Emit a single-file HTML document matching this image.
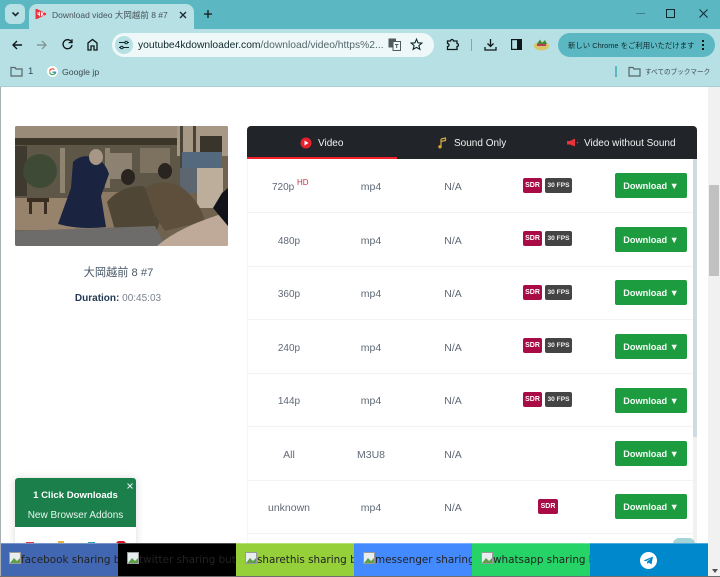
<!DOCTYPE html>
<html><head><meta charset="utf-8"><style>
*{box-sizing:border-box}
html,body{margin:0;padding:0;width:720px;height:577px;overflow:hidden;background:#fff;font-family:"Liberation Sans","Noto Sans CJK JP",sans-serif}
.a{position:absolute;white-space:nowrap}
.c{position:absolute;white-space:nowrap;text-align:center;color:#5f6976;font-size:10.5px;line-height:14px}
.r{margin-top:1px}
.p{font-size:10px;margin-top:2px}
.dl{position:absolute;left:615px;width:72px;height:25px;background:#1c9b3f;border-radius:2px;color:#f4fbf6;font-size:9.2px;font-weight:bold;line-height:26px;text-align:center}
.sdr{position:absolute;left:523px;width:19px;height:15px;background:#a80b45;border-radius:2px;color:#fff;font-size:7px;font-weight:bold;line-height:15px;text-align:center}
.fps{position:absolute;left:545px;width:27px;height:15px;background:#444;border-radius:2px;color:#f0f0f0;font-size:6.6px;font-weight:bold;line-height:15px;text-align:center}
.sep{position:absolute;left:247px;width:446px;height:1px;background:#f3f3f3}
.sh{position:absolute;top:543px;height:33px;width:118px;overflow:hidden;font-family:"DejaVu Sans",sans-serif;font-size:10.4px;line-height:35px;color:#222;white-space:nowrap}
.sh svg{position:absolute;left:9px;top:9px}
.sh span{position:absolute;left:21px;top:0}
</style></head><body>

<!-- tab strip -->
<div class="a" style="left:0;top:0;width:720px;height:29px;background:#5bb8c2"></div>
<div class="a" style="left:5px;top:4px;width:20px;height:20px;background:#b7e0e4;border-radius:6px"></div>
<svg class="a" style="left:11px;top:11px" width="9" height="7" viewBox="0 0 9 7"><path d="M1.5 1.5L4.5 4.5L7.5 1.5" fill="none" stroke="#1b2a2e" stroke-width="1.6"/></svg>
<div class="a" style="left:29px;top:4px;width:165px;height:25px;background:#b7e0e4;border-radius:8px 8px 0 0"></div>
<svg class="a" style="left:34px;top:8px" width="13" height="12" viewBox="0 0 13 12"><path d="M1.5 1.5Q1.5 .5 3 1L11.5 5Q13 6 11.5 7L3 11Q1.5 11.5 1.5 10.5Z" fill="#e8323c"/><path d="M4 4v2.5H6M5.6 3.8V8.2M7.5 3.8V8.2M9.5 4L8 6L9.5 8" fill="none" stroke="#fff" stroke-width=".9"/></svg>
<div class="a" style="left:52px;top:8px;font-size:8.5px;line-height:14px;color:#46545a">Download video 大岡越前 8 #7</div>
<svg class="a" style="left:179px;top:11px" width="8" height="8" viewBox="0 0 8 8"><path d="M1 1L7 7M7 1L1 7" stroke="#1b2a2e" stroke-width="1.3"/></svg>
<svg class="a" style="left:203px;top:9px" width="10" height="10" viewBox="0 0 10 10"><path d="M5 1V9M1 5H9" stroke="#10181a" stroke-width="1.3"/></svg>
<!-- window controls -->
<div class="a" style="left:636px;top:13px;width:9px;height:1px;background:#3f8089"></div>
<div class="a" style="left:666px;top:9px;width:9px;height:9px;border:1.3px solid #10282c"></div>
<svg class="a" style="left:699px;top:9px" width="9" height="9" viewBox="0 0 9 9"><path d="M.5 .5L8.5 8.5M8.5 .5L.5 8.5" stroke="#10282c" stroke-width="1"/></svg>

<!-- toolbar -->
<div class="a" style="left:0;top:29px;width:720px;height:57px;background:#b7e0e4"></div>
<div class="a" style="left:0;top:86px;width:720px;height:1px;background:#a9cfd4"></div>
<svg class="a" style="left:10px;top:38px" width="14" height="14" viewBox="0 0 14 14"><path d="M12 7H3M7 3L3 7L7 11" fill="none" stroke="#10181a" stroke-width="1.4"/></svg>
<svg class="a" style="left:35px;top:38px" width="14" height="14" viewBox="0 0 14 14"><path d="M2 7H11M7 3L11 7L7 11" fill="none" stroke="#84989c" stroke-width="1.4"/></svg>
<svg class="a" style="left:61px;top:38px" width="13" height="13" viewBox="0 0 13 13"><path d="M10.5 4A4.5 4.5 0 1 0 11 7" fill="none" stroke="#10181a" stroke-width="1.4"/><path d="M11 1.2V4.6H7.6" fill="none" stroke="#10181a" stroke-width="1.3"/></svg>
<svg class="a" style="left:86px;top:38px" width="13" height="13" viewBox="0 0 13 13"><path d="M2 12V5L6.5 1.5L11 5V12H8V8H5V12Z" fill="none" stroke="#10181a" stroke-width="1.3"/></svg>
<div class="a" style="left:112px;top:33px;width:322px;height:24px;background:#eef8f8;border-radius:12px"></div>
<div class="a" style="left:115px;top:36px;width:18px;height:18px;background:#b7e0e4;border-radius:9px"></div>
<svg class="a" style="left:119px;top:40px" width="10" height="10" viewBox="0 0 10 10"><path d="M0 2.5H6M8.5 2.5H10M0 7.5H1.5M4 7.5H10" stroke="#10282c" stroke-width="1.1"/><circle cx="7.2" cy="2.5" r="1.3" fill="none" stroke="#10282c"/><circle cx="2.8" cy="7.5" r="1.3" fill="none" stroke="#10282c"/></svg>
<div class="a" style="left:138px;top:39px;font-size:10.3px;line-height:14px;color:#10282c">youtube4kdownloader.com<span style="color:#52666a">/download/video/https%2...</span></div>
<svg class="a" style="left:388px;top:38px" width="13" height="13" viewBox="0 0 13 13"><rect x="0.5" y="0.5" width="7.5" height="9" fill="#4d5a5e"/><rect x="5" y="3.5" width="7.5" height="9" fill="#eef8f8" stroke="#4d5a5e"/><path d="M7 6.5H10.5M8.7 6V10" stroke="#4d5a5e"/></svg>
<svg class="a" style="left:410px;top:38px" width="13" height="13" viewBox="0 0 13 13"><path d="M6.5 1.2L8 4.8L11.9 5.1L8.9 7.6L9.9 11.4L6.5 9.4L3.1 11.4L4.1 7.6L1.1 5.1L5 4.8Z" fill="none" stroke="#10282c" stroke-width="1.1"/></svg>
<svg class="a" style="left:446px;top:38px" width="13" height="13" viewBox="0 0 13 13"><path d="M1.5 3H4.5A1.5 1.5 0 0 1 7.5 3H11V5.5A1.5 1.5 0 0 1 11 8.5V11.5H1.5V8.5A1.5 1.5 0 0 0 1.5 5.5Z" fill="none" stroke="#10181a" stroke-width="1.3"/></svg>
<div class="a" style="left:471px;top:39px;width:1px;height:12px;background:#5bb8c2"></div>
<svg class="a" style="left:484px;top:38px" width="13" height="13" viewBox="0 0 13 13"><path d="M6.5 1V8M3.5 5.5L6.5 8.5L9.5 5.5M1 9V12H12V9" fill="none" stroke="#10181a" stroke-width="1.3"/></svg>
<svg class="a" style="left:511px;top:39px" width="11" height="11" viewBox="0 0 11 11"><rect x="0.6" y="0.6" width="9.8" height="9.8" fill="none" stroke="#10181a" stroke-width="1.2"/><rect x="6" y="1" width="4" height="9" fill="#10181a"/></svg>
<svg class="a" style="left:534px;top:38px" width="15" height="13" viewBox="0 0 15 13"><ellipse cx="7.5" cy="8" rx="7.5" ry="4.5" fill="#d6c66a"/><path d="M3 6L6 1.5L8 5L11 2L13 6Z" fill="#3d8a3f"/><rect x="3" y="6" width="9" height="2" fill="#c23a5a"/></svg>
<div class="a" style="left:558px;top:33px;width:157px;height:24px;background:#5bb8c2;border-radius:12px"></div>
<div class="a" style="left:568px;top:40px;font-size:7.4px;line-height:12px;color:#10282c">新しい Chrome をご利用いただけます</div>
<div class="a" style="left:702px;top:40px;width:2px;height:2px;background:#10181a;box-shadow:0 4px #10181a,0 8px #10181a"></div>

<!-- bookmarks -->
<svg class="a" style="left:10px;top:66px" width="13" height="11" viewBox="0 0 13 11"><path d="M1 1.5H5L6 3H12V10H1Z" fill="none" stroke="#56666a" stroke-width="1.2"/></svg>
<div class="a" style="left:28px;top:66px;font-size:9.5px;line-height:12px;color:#2c4a60">1</div>
<svg class="a" style="left:47px;top:66px" width="11" height="11" viewBox="0 0 24 24"><circle cx="12" cy="12" r="12" fill="#fff"/><path d="M19 12.5H12V15H16.3A4.8 4.8 0 0 1 7.3 13L4.7 15A8 8 0 0 0 20 12.5Z" fill="#34a853"/><path d="M7.3 11A4.8 4.8 0 0 1 15.2 8.8L17 7A8 8 0 0 0 4.7 9Z" fill="#ea4335"/><path d="M4.7 9A8 8 0 0 0 4.7 15L7.3 13A5 5 0 0 1 7.3 11Z" fill="#fbbc05"/><path d="M20 12H12V14.5H16.5L19 17Q20.5 15 20 12Z" fill="#4285f4"/></svg>
<div class="a" style="left:62px;top:66px;font-size:8.7px;line-height:12px;color:#3d4a4e">Google jp</div>
<div class="a" style="left:615px;top:66px;width:2px;height:11px;background:#5bb8c2"></div>
<svg class="a" style="left:628px;top:66px" width="13" height="11" viewBox="0 0 13 11"><path d="M1 1.5H5L6 3H12V10H1Z" fill="none" stroke="#56666a" stroke-width="1.2"/></svg>
<div class="a" style="left:645px;top:67px;font-size:6.6px;line-height:12px;color:#3d4a4e">すべてのブックマーク</div>

<!-- page edges -->
<div class="a" style="left:0;top:87px;width:1px;height:490px;background:#a8b0b4"></div>
<div class="a" style="left:708px;top:87px;width:12px;height:490px;background:#f1f1f1"></div>
<div class="a" style="left:709px;top:185px;width:10px;height:91px;background:#c1c1c1"></div>
<div class="a" style="left:712px;top:569px;border:3px solid transparent;border-top:4px solid #505050"></div>

<!-- thumbnail -->
<svg class="a" style="left:15px;top:126px" width="213" height="120" viewBox="0 0 213 120">
<defs><clipPath id="r"><rect width="213" height="120" rx="2"/></clipPath></defs>
<g clip-path="url(#r)">
<rect width="213" height="120" fill="#6f6350"/>
<rect x="0" y="0" width="162" height="12" fill="#9a8b78"/>
<rect x="0" y="12" width="165" height="7" fill="#3c3629"/>
<rect x="0" y="19" width="170" height="55" fill="#5e5646"/>
<rect x="0" y="20" width="12" height="50" fill="#3f3a30"/>
<circle cx="25" cy="45" r="17" fill="#3f4a36"/>
<rect x="45" y="22" width="5" height="45" fill="#8f8470"/>
<rect x="90" y="22" width="5" height="40" fill="#8f8470"/>
<rect x="95" y="27" width="22" height="26" fill="#8d8272"/>
<rect x="125" y="22" width="30" height="25" fill="#7c725f"/>
<rect x="162" y="0" width="51" height="30" fill="#a69884"/>
<rect x="165" y="0" width="3" height="50" fill="#4a4438"/>
<rect x="178" y="0" width="3" height="30" fill="#4a4438"/>
<rect x="185" y="10" width="22" height="18" fill="#3a352c"/>
<rect x="167" y="26" width="40" height="16" fill="#54697e"/>
<rect x="182" y="42" width="26" height="40" fill="#bcae9a"/>
<rect x="165" y="42" width="17" height="25" fill="#5d6670"/>
<path d="M0 72H60V104H0Z" fill="#97836c"/>
<path d="M60 66H105V104H60Z" fill="#8c7a64"/>
<rect x="12" y="72" width="22" height="4" fill="#3a2e22"/>
<rect x="14" y="76" width="3" height="12" fill="#3a2e22"/><rect x="29" y="76" width="3" height="12" fill="#3a2e22"/>
<path d="M43 98L56 62L58 36Q66 28 78 31Q90 35 94 48L86 70L91 101Q65 104 43 98Z" fill="#1a2340"/>
<ellipse cx="81" cy="31" rx="7" ry="8" fill="#a89784"/>
<path d="M92 76Q105 60 128 60Q142 72 145 95L142 104H100Z" fill="#4f4636"/>
<ellipse cx="113" cy="51" rx="7" ry="8" fill="#2a2420"/>
<path d="M130 62Q145 52 165 60Q185 75 190 95L150 105L140 90Z" fill="#5d4f3c"/>
<ellipse cx="150" cy="45" rx="7" ry="8" fill="#2a2420"/>
<path d="M0 105L140 100L150 120H0Z" fill="#6d6c6a"/>
<path d="M142 120Q165 100 213 86V120Z" fill="#bfa998"/>
<path d="M198 82L207 67L213 62V100Z" fill="#12121a"/>
</g></svg>
<div class="c" style="left:12px;width:213px;top:266px;font-size:11.2px;color:#4a5868">大岡越前 8 #7</div>
<div class="c" style="left:15px;width:206px;top:292px;font-size:10px;color:#7a838e"><b style="color:#253a55">Duration:</b> 00:45:03</div>

<!-- tabs header -->
<div class="a" style="left:247px;top:126px;width:450px;height:33px;background:#212529;border-radius:4px 4px 0 0"></div>
<div class="a" style="left:247px;top:157px;width:150px;height:2px;background:#f5222d"></div>
<svg class="a" style="left:300px;top:137px" width="12" height="12" viewBox="0 0 12 12"><circle cx="6" cy="6" r="5.5" fill="#e8202e"/><path d="M4.5 3.5L8.5 6L4.5 8.5Z" fill="#fff"/></svg>
<div class="a" style="left:318px;top:137px;font-size:10px;line-height:14px;color:#f2f2f2">Video</div>
<svg class="a" style="left:438px;top:137px" width="9" height="12" viewBox="0 0 9 12"><path d="M3 2V9.5M3 2L7.5 1V3.5L3 4.5" fill="none" stroke="#d6a840" stroke-width="1.2"/><circle cx="2" cy="9.8" r="1.7" fill="#d6a840"/></svg>
<div class="a" style="left:454px;top:137px;font-size:10px;line-height:14px;color:#f2f2f2">Sound Only</div>
<svg class="a" style="left:567px;top:138px" width="12" height="10" viewBox="0 0 12 10"><path d="M0 3H3L8 .5V8.5L3 6.5H0Z" fill="#e8323c"/><circle cx="10.5" cy="4.5" r=".8" fill="#e8323c"/></svg>
<div class="a" style="left:584px;top:137px;font-size:10px;line-height:14px;color:#f2f2f2">Video without Sound</div>

<!-- table frame -->
<div class="a" style="left:247px;top:159px;width:1px;height:384px;background:#f5f5f5"></div>
<div class="a" style="left:693px;top:159px;width:4px;height:278px;background:#cfdbe0"></div>
<div class="a" style="left:693px;top:437px;width:4px;height:106px;background:#f1f1f1"></div>
<div class="sep" style="top:212px"></div><div class="sep" style="top:266px"></div><div class="sep" style="top:319px"></div><div class="sep" style="top:373px"></div><div class="sep" style="top:426px"></div><div class="sep" style="top:480px"></div><div class="sep" style="top:533px"></div>

<!-- rows -->
<div class="c p" style="left:272px;top:179px">720p</div><div class="a" style="left:297px;top:178px;font-size:8px;color:#b8324a;line-height:10px">HD</div>
<div class="c r" style="left:331px;width:80px;top:179px">mp4</div><div class="c r" style="left:413px;width:80px;top:179px">N/A</div>
<div class="sdr" style="top:178px">SDR</div><div class="fps" style="top:178px">30 FPS</div><div class="dl" style="top:173px">Download ▼</div>

<div class="c p" style="left:247px;width:84px;top:233px">480p</div><div class="c r" style="left:331px;width:80px;top:233px">mp4</div><div class="c r" style="left:413px;width:80px;top:233px">N/A</div>
<div class="sdr" style="top:231px">SDR</div><div class="fps" style="top:231px">30 FPS</div><div class="dl" style="top:227px">Download ▼</div>

<div class="c p" style="left:247px;width:84px;top:286px">360p</div><div class="c r" style="left:331px;width:80px;top:286px">mp4</div><div class="c r" style="left:413px;width:80px;top:286px">N/A</div>
<div class="sdr" style="top:285px">SDR</div><div class="fps" style="top:285px">30 FPS</div><div class="dl" style="top:280px">Download ▼</div>

<div class="c p" style="left:247px;width:84px;top:340px">240p</div><div class="c r" style="left:331px;width:80px;top:340px">mp4</div><div class="c r" style="left:413px;width:80px;top:340px">N/A</div>
<div class="sdr" style="top:338px">SDR</div><div class="fps" style="top:338px">30 FPS</div><div class="dl" style="top:334px">Download ▼</div>

<div class="c p" style="left:247px;width:84px;top:393px">144p</div><div class="c r" style="left:331px;width:80px;top:393px">mp4</div><div class="c r" style="left:413px;width:80px;top:393px">N/A</div>
<div class="sdr" style="top:392px">SDR</div><div class="fps" style="top:392px">30 FPS</div><div class="dl" style="top:388px">Download ▼</div>

<div class="c r" style="left:247px;width:84px;top:447px">All</div><div class="c r" style="left:331px;width:80px;top:447px">M3U8</div><div class="c r" style="left:413px;width:80px;top:447px">N/A</div>
<div class="dl" style="top:441px">Download ▼</div>

<div class="c r" style="left:247px;width:84px;top:500px">unknown</div><div class="c r" style="left:331px;width:80px;top:500px">mp4</div><div class="c r" style="left:413px;width:80px;top:500px">N/A</div>
<div class="sdr" style="top:499px;left:538px;width:20px">SDR</div><div class="dl" style="top:494px">Download ▼</div>

<!-- addon popup -->
<div class="a" style="left:15px;top:478px;width:121px;height:70px;background:#fff;box-shadow:0 0 8px rgba(0,0,0,.15);border-radius:3px 3px 0 0"></div>
<div class="a" style="left:15px;top:478px;width:121px;height:49px;background:#1a7f4b;border-radius:3px 3px 0 0"></div>
<div class="a" style="left:15px;top:489px;width:121px;text-align:center;font-size:9.6px;font-weight:bold;line-height:14px;color:#fff">1 Click Downloads</div>
<div class="a" style="left:15px;top:509px;width:121px;text-align:center;font-size:10px;line-height:14px;color:#e8f5ee">New Browser Addons</div>
<svg class="a" style="left:127px;top:483px" width="6" height="6" viewBox="0 0 6 6"><path d="M.5 .5L5.5 5.5M5.5 .5L.5 5.5" stroke="#e4f2ea" stroke-width="1"/></svg>
<div class="a" style="left:26px;top:542px;width:8px;height:2px;background:#e8323c"></div>
<div class="a" style="left:58px;top:541px;width:6px;height:3px;background:#e8b040"></div>
<div class="a" style="left:88px;top:542px;width:7px;height:2px;background:#2aa0b0"></div>
<div class="a" style="left:116px;top:541px;width:10px;height:3px;background:#d8102c;border-radius:5px 5px 0 0"></div>
<div class="a" style="left:673px;top:538px;width:22px;height:6px;background:#a4d4d8;border-radius:11px 11px 0 0"></div>

<!-- share bar -->
<div class="sh" style="left:1px;background:#4267b2"><svg style="left:8px" width="12" height="12" viewBox="0 0 12 12"><rect x=".5" y=".5" width="11" height="11" fill="#e8eef0" stroke="#9a9a9a"/><path d="M1 11L5 6L8 9L11 6V11Z" fill="#5ca04a"/></svg><span style="left:20px">facebook sharing button</span></div>
<div class="sh" style="left:118px;background:#000"><svg width="12" height="12" viewBox="0 0 12 12"><rect x=".5" y=".5" width="11" height="11" fill="#e8eef0" stroke="#9a9a9a"/><path d="M1 11L5 6L8 9L11 6V11Z" fill="#5ca04a"/></svg><span>twitter sharing button</span></div>
<div class="sh" style="left:236px;background:#95d03a"><svg width="12" height="12" viewBox="0 0 12 12"><rect x=".5" y=".5" width="11" height="11" fill="#e8eef0" stroke="#9a9a9a"/><path d="M1 11L5 6L8 9L11 6V11Z" fill="#5ca04a"/></svg><span>sharethis sharing button</span></div>
<div class="sh" style="left:354px;background:#448aff"><svg width="12" height="12" viewBox="0 0 12 12"><rect x=".5" y=".5" width="11" height="11" fill="#e8eef0" stroke="#9a9a9a"/><path d="M1 11L5 6L8 9L11 6V11Z" fill="#5ca04a"/></svg><span>messenger sharing button</span></div>
<div class="sh" style="left:472px;background:#25d366"><svg width="12" height="12" viewBox="0 0 12 12"><rect x=".5" y=".5" width="11" height="11" fill="#e8eef0" stroke="#9a9a9a"/><path d="M1 11L5 6L8 9L11 6V11Z" fill="#5ca04a"/></svg><span>whatsapp sharing button</span></div>
<div class="a" style="left:590px;top:543px;width:118px;height:33px;background:#0088cc"></div>
<svg class="a" style="left:640px;top:552px" width="17" height="17" viewBox="0 0 17 17"><circle cx="8.5" cy="8.5" r="8.5" fill="#fff"/><path d="M3.5 8.5L13 4.5L11.5 12.5L8.8 10.6L7.4 12L7 9.8L11 6.3L6 9.3Z" fill="#0088cc"/></svg>
<div class="a" style="left:0;top:576px;width:720px;height:1px;background:#6e6e6e"></div>
<div class="a" style="left:1px;top:543px;width:707px;height:1px;background:rgba(255,255,255,.3)"></div>
</body></html>
